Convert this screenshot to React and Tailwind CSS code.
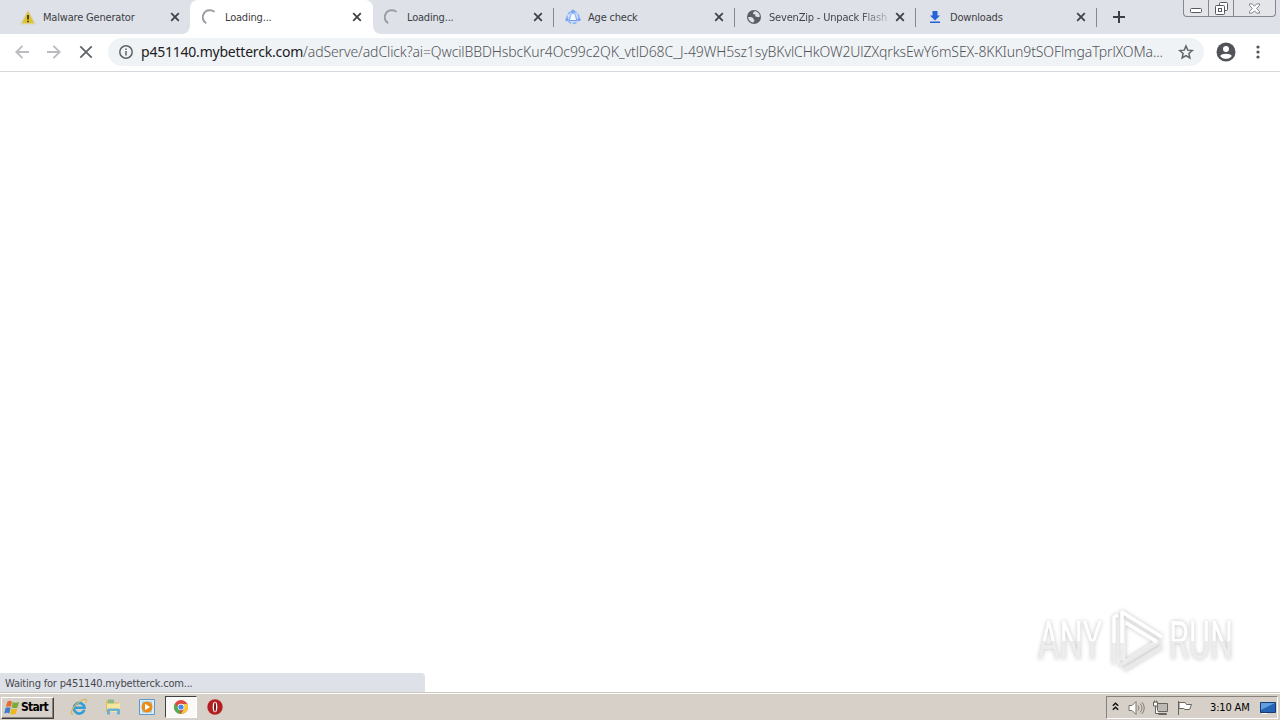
import React from 'react';

const tabs = [
    { title: 'Malware Generator', icon: 'warning', width: 'w-[190px]', pad: 'pl-5' },
    { title: 'Loading...', icon: 'spinner', active: true, width: 'w-[183px]', pad: 'pl-3' },
    { title: 'Loading...', icon: 'spinner', width: 'w-[181px]', pad: 'pl-[11px]', divider: true },
    { title: 'Age check', icon: 'puzzle', width: 'w-[181px]', pad: 'pl-[11px]', divider: true },
    { title: 'SevenZip - Unpack Flash', icon: 'globe', width: 'w-[181px]', pad: 'pl-[11px]', divider: true, fade: true },
    { title: 'Downloads', icon: 'download', width: 'w-[181px]', pad: 'pl-[11px]', divider: true },
];

// Favicons of the tabs
const TabIcon = ({ name }) => {
    if (name === 'warning') {
        return (
            <svg width="16" height="16" viewBox="0 0 16 16">
                <path d="M8 .5 16 15.500H0z" fill="#d9d4bd" />
                <path d="M8 2 14 14.200H2z" fill="#e0c22f" />
                <path d="M8 6v4.500M8 11.700v1.500" stroke="#40391c" strokeWidth="1.800" />
            </svg>
        );
    }
    if (name === 'spinner') {
        return (
            <svg width="16" height="16" viewBox="0 0 16 16" fill="none" stroke="#989ca3" strokeWidth="1.900">
                <path d="M4.200 14.200A7 7 0 0 1 8 1.200a7 7 0 0 1 4.600 1.700" />
            </svg>
        );
    }
    if (name === 'puzzle') {
        return (
            <svg width="16" height="16" viewBox="0 0 16 16" fill="none">
                <circle cx="8" cy="8.500" r="6" fill="#c9ddff" stroke="#8ab1f5" strokeWidth="1.500" strokeDasharray="4 1.500" />
                <path d="M8 4.200c2.600 0 2.600 3.800 3.800 7.300H4.200C5.400 8 5.400 4.200 8 4.200z" fill="#f5f9ff" stroke="#6f9dee" strokeLinejoin="round" />
                <g fill="#77a2ee">
                    <circle cx="8" cy="2.200" r="1.700" />
                    <circle cx="1.900" cy="10.500" r="1.600" />
                    <circle cx="14.100" cy="10.500" r="1.600" />
                </g>
            </svg>
        );
    }
    if (name === 'globe') {
        return (
            <svg width="16" height="16" viewBox="0 0 16 16">
                <circle cx="8" cy="8" r="7" fill="#5b5f65" />
                <path d="M2.200 8.200c2.300-.5 5 .1 5.200 1.600.1 1 1.300.8 1 1.900-.2.8-1 .8-1.200 2C4.700 13.200 2.300 11.300 2.200 8.200zM8.500 2.300 7 3.800l.1 1.300 2.200.3-.2 1.800 3.300 1 1.500-.6C13.700 4.600 11.500 2.300 8.500 2.300z" fill="#dee1e6" />
            </svg>
        );
    }
    return (
        <svg width="16" height="16" viewBox="0 0 16 16" fill="#2464d8">
            <path d="M5.500 2h5v4.500H13L8 11.500l-5-5h2.500zM3 12.600h10V14H3z" />
        </svg>
    );
};

const CloseIcon = () => (
    <svg width="10" height="10" viewBox="0 0 10 10" stroke="#3f4246" strokeWidth="1.800" className="shrink-0">
        <path d="m1.200 1.200 7.600 7.600M8.800 1.200 1.200 8.800" />
    </svg>
);

const Tab = ({ tab }) => (
    <div className={`relative flex h-[34px] shrink-0 items-center ${tab.width} ${tab.pad} ${tab.active ? 'rounded-t-lg bg-white' : ''}`}>
        {/* Flared feet of the selected tab */}
        {tab.active && (
            <>
                <svg width="8" height="8" viewBox="0 0 8 8" className="absolute bottom-0 -left-2"><path d="M8 0v8H0a8 8 0 0 0 8-8" fill="#fff" /></svg>
                <svg width="8" height="8" viewBox="0 0 8 8" className="absolute -right-2 bottom-0"><path d="M0 0v8h8a8 8 0 0 1-8-8" fill="#fff" /></svg>
            </>
        )}
        <TabIcon name={tab.icon} />
        <span className={`ml-[7px] flex-1 overflow-hidden pt-0.5 whitespace-nowrap text-[11px] tracking-[-0.19px] ${tab.fade ? 'bg-gradient-to-r from-[#3c4043] from-70% to-[#c0c3c8] to-96% bg-clip-text text-transparent' : 'text-[#3c4043]'}`}>
            {tab.title}
        </span>
        <div className="mr-[10px]">
            <CloseIcon />
        </div>
        {tab.divider && <div className="h-[19px] w-px bg-[#85888e]" />}
        {tab.active && <div className="w-px" />}
    </div>
);

const WindowControls = () => (
    <div className="mr-[4px] ml-auto flex h-[17px] self-start rounded-b-[4px] border border-t-0 border-[#85888e] bg-[#e3e5e9]">
        <div className="flex w-[25px] items-center justify-center border-r border-[#85888e]">
            <svg width="12" height="5" className="mt-1" fill="#fff" stroke="#55585e"><rect x=".5" y=".5" width="11" height="4" rx="1" /></svg>
        </div>
        <div className="flex w-[25px] items-center justify-center border-r border-[#85888e]">
            <svg width="13" height="13" viewBox="0 0 13 13" fill="#fff" stroke="#55585e">
                <rect x="4.500" y=".5" width="8" height="8" rx="1" />
                <rect x=".5" y="3.500" width="9" height="9" rx="1" />
                <rect x="3.500" y="6.500" width="3" height="3" />
            </svg>
        </div>
        <div className="flex w-[41px] items-center justify-center">
            <svg width="11" height="11" viewBox="0 0 12 11" fill="#fff" stroke="#6b6e74" strokeWidth=".9">
                <path d="M.5.500h3L6 3 8.500.500h3v1.500L8.300 5.500l3.200 3.200v1.800h-3L6 8l-2.500 2.500h-3V8.700l3.200-3.200L.5 2z" />
            </svg>
        </div>
    </div>
);

const Toolbar = () => (
    <div className="flex h-[38px] shrink-0 items-center border-b border-[#d5d7da] bg-white pb-[2px]">
        <div className="flex w-[108px] items-center gap-[18px] pl-[15px]">
            <svg width="14" height="14" viewBox="0 0 14 14" fill="none" stroke="#b9bbbe" strokeWidth="1.800"><path d="M14 7H1.500M7.500.800 1.300 7l6.200 6.200" /></svg>
            <svg width="14" height="14" viewBox="0 0 14 14" fill="none" stroke="#b9bbbe" strokeWidth="1.800"><path d="M0 7h12.500M6.500.800 12.700 7l-6.200 6.200" /></svg>
            <svg width="14" height="14" viewBox="0 0 14 14" fill="none" stroke="#5f6368" strokeWidth="1.800"><path d="m1.300 1.300 11.400 11.400M12.700 1.300 1.300 12.700" /></svg>
        </div>
        <div className="flex h-7 w-[1096px] items-center rounded-full bg-[#f0f3f5] pl-[11px]">
            <svg width="14" height="14" viewBox="0 0 14 14" fill="none" stroke="#5f6368" strokeWidth="1.500" className="shrink-0">
                <circle cx="7" cy="7" r="6.200" />
                <path d="M7 6v4.500M7 3.400v1.500" />
            </svg>
            <div className="ml-2 flex w-[1034px] shrink-0 whitespace-nowrap font-['Noto_Sans','DejaVu_Sans',sans-serif] text-[14px] leading-5">
                <span className="w-[162px] shrink-0 tracking-[-0.22px] text-[#202124]">p451140.mybetterck.com</span>
                <span className="font-light tracking-[-0.117px] text-[#50545a]">
                    /adServe/adClick?ai=QwcilBBDHsbcKur4Oc99c2QK_vtlD68C_J-49WH5sz1syBKvlCHkOW2UlZXqrksEwY6mSEX-8KKIun9tSOFlmgaTprlXOMa...
                </span>
            </div>
            <svg width="16" height="16" viewBox="0 0 24 24" fill="none" stroke="#5f6368" strokeWidth="2.200" className="ml-[3px] shrink-0">
                <path d="m12 3 2.600 6.200 6.800.6-5.100 4.500 1.500 6.600-5.800-3.500-5.800 3.500 1.500-6.600-5.100-4.500 6.800-.6z" />
            </svg>
        </div>
        <svg width="20" height="20" viewBox="0 0 20 20" className="ml-3">
            <circle cx="10" cy="10" r="9.500" fill="#505358" />
            <circle cx="10" cy="7" r="3" fill="#fff" />
            <path d="M4.200 14c1.300-3 10.300-3 11.600 0-2.500 3.800-9.100 3.800-11.600 0z" fill="#fff" />
        </svg>
        <svg width="4" height="14" viewBox="0 0 4 14" fill="#505358" className="ml-5">
            <circle cx="2" cy="2" r="1.600" /><circle cx="2" cy="7" r="1.600" /><circle cx="2" cy="12" r="1.600" />
        </svg>
    </div>
);

const Watermark = () => (
    <div className="absolute right-[43px] bottom-[19px] flex h-[64px] w-[198px] items-center drop-shadow-[0_0_2px_rgba(0,0,0,0.24)]">
        <span className="absolute left-[-1px] origin-left scale-x-[0.62] bg-gradient-to-b from-white from-50% to-[#ededed] to-50% bg-clip-text font-['Roboto','Liberation_Sans',sans-serif] text-[53px] leading-[53px] text-transparent">ANY</span>
        <svg width="60" height="64" viewBox="0 0 60 64" fill="none" strokeLinejoin="round" className="absolute left-[68px]">
            <path d="M17 12 50 32 17 53z" stroke="#f0f0f0" strokeWidth="3" />
            <path d="M54 32 12 57M55 38 17 61" stroke="#eaeaea" strokeWidth="3.500" />
            <path d="M7 34v21M15 34v17" stroke="#ededed" strokeWidth="3.500" />
            <path d="M11 6 7 8v26M15 34V3l40 25M19 14l31 19" stroke="#fff" strokeWidth="3.500" />
        </svg>
        <span className="absolute left-[130px] origin-left scale-x-[0.61] bg-gradient-to-b from-white from-50% to-[#ededed] to-50% bg-clip-text font-['Roboto','Liberation_Sans',sans-serif] text-[53px] leading-[53px] text-transparent">RUN</span>
    </div>
);

const WindowsFlag = () => (
    <svg width="16" height="15" viewBox="0 0 16 15">
        <path d="M3.500 1.500c2-1.200 3-.8 4.500 0L6.800 7c-1.500-.8-3-1-5 .1z" fill="#e66b30" />
        <path d="M8.800 2c2 1 3.700 1 6.200 0L13.500 7.400c-2 1.100-3.800.9-5.900.1z" fill="#7aab38" />
        <path d="M1.500 8c2-1 3.500-.8 5 0l-1.200 5.500c-1.500-.9-3-1-5 0z" fill="#3b7dcc" />
        <path d="M7.400 8.500c2 .9 3.600.9 5.800 0L12 13.700c-2 1-3.900 1-5.900 0z" fill="#edb91e" />
    </svg>
);

const Taskbar = () => (
    <div className="flex h-[28px] shrink-0 items-center border-t border-[#c8c6bf] bg-[#d6d0c9] shadow-[inset_0_1px_0_#fff]">
        <div className="mt-0.5 ml-px flex h-[22px] w-[53px] items-center gap-px border border-t-white border-r-[#404040] border-b-[#404040] border-l-white pl-[2px] shadow-[inset_-1px_-1px_0_#87827b]">
            <WindowsFlag />
            <span className="-mt-px text-[12px] leading-4 font-bold tracking-[-0.75px] text-black">Start</span>
        </div>
        <div className="ml-4 flex items-center">
            {/* Internet Explorer */}
            <svg width="18" height="18" viewBox="0 0 18 18" fill="none">
                <path d="M14.300 11.800A5.300 5.300 0 1 1 14.500 9.700H5" stroke="#329ed3" strokeWidth="2.600" />
                <path d="M3 16C-1.500 17 3 8 10 3.500s7.500-1.500 5.300 1.500" stroke="#d8b758" strokeWidth="1.300" />
            </svg>
            {/* Explorer */}
            <svg width="18" height="18" viewBox="0 0 18 18" className="ml-4">
                <path d="M2 2.500h5l1.500 2H15V14H2z" fill="#dfbd57" />
                <path d="M4 1.500h6v5H4z" fill="#8dbb87" />
                <path d="M3 5.500h13V14H3z" fill="#f5e59d" />
                <path d="M3 16.500V12q0-1.500 1.500-1.500h10Q16 10.500 16 12v4.500h-3V13H6v3.500z" fill="#69b0d4" />
            </svg>
            {/* Media Player */}
            <svg width="18" height="18" viewBox="0 0 18 18" className="ml-4">
                <path d="M1.500 1.500h15v15h-15z" fill="#d9edf8" stroke="#5a9bcc" />
                <path d="M4 3.500h10v11H4z" fill="#a3cbe5" />
                <circle cx="9" cy="9" r="5.500" fill="#ed8b18" />
                <path d="m7 5.800 5 3.200-5 3.200z" fill="#fff" />
            </svg>
        </div>
        <div className="mt-px ml-[9px] flex h-[22px] w-[32px] items-center justify-center border border-t-[#404040] border-r-white border-b-white border-l-[#404040] bg-[#faf9f8]">
            <svg width="14" height="14" viewBox="0 0 14 14">
                <circle cx="7" cy="7" r="7" fill="#dd4b3e" />
                <path d="M1 3.500 5 9 7 14A7 7 0 0 1 1 3.500z" fill="#4caf50" />
                <path d="M7 4h6.300A7 7 0 0 1 7 14l3-5z" fill="#f5cb37" />
                <circle cx="7" cy="7" r="3.300" fill="#fff" />
                <circle cx="7" cy="7" r="2.600" fill="#4687ed" />
            </svg>
        </div>
        <svg width="16" height="16" viewBox="0 0 16 16" className="ml-[10px]">
            <circle cx="8" cy="8" r="7.700" fill="#b51e20" />
            <ellipse cx="8" cy="8" rx="2.300" ry="5.300" fill="#fff" />
            <ellipse cx="8" cy="8" rx="1" ry="4.700" fill="#7c1515" />
        </svg>
        <div className="mt-0.5 mr-[2px] ml-auto flex h-[23px] w-[172px] items-center border border-t-[#87827b] border-r-white border-b-white border-l-[#87827b] pl-[5px]">
            <svg width="7" height="9" viewBox="0 0 7 9" fill="none" stroke="#111" strokeWidth="1.500" className="mb-0.5"><path d="m.8 3.700 2.700-2.500 2.700 2.500M.8 7.700l2.700-2.500 2.700 2.500" /></svg>
            <svg width="17" height="16" viewBox="0 0 17 16" className="ml-[9px]" fill="none" stroke="#77736d">
                <path d="M1 5.500h3l4-4v13l-4-4H1z" fill="#fff" />
                <path d="M10 5.500q2 2.500 0 5M12 3.500q4 4.500 0 9M14 2q4.500 6 0 12" strokeWidth=".9" />
            </svg>
            <svg width="17" height="16" viewBox="0 0 17 16" className="ml-[7px]" fill="#fff" stroke="#68645e">
                <path d="M5.500 3.500h10v8h-10z" fill="#bdbab5" />
                <path d="M1.500 2v4h4V2zM3.500 6v7.500h3M2.500.500v2M4.500.500v2M6.500 13.500h8v1h-8z" />
            </svg>
            <svg width="16" height="16" viewBox="0 0 16 16" className="ml-[8px]" fill="#fff" stroke="#68645e">
                <path d="M1.500 1v14M2 2.500h6l1.500 2h5l-2 5H8L6.500 8.500H2z" />
            </svg>
            <span className="ml-[17px] w-[42px] pt-px whitespace-nowrap text-[11px] tracking-[-0.15px] text-black">3:10 AM</span>
            <svg width="16" height="14" viewBox="0 0 16 14" className="ml-[8px]">
                <path d="M.5 1.500h15v10H.5z" fill="#2463b5" stroke="#183d75" />
                <path d="M1 2h14L1 9z" fill="#5f9edf" />
                <path d="M2 12.500h5" stroke="#fff" />
            </svg>
        </div>
    </div>
);

export default function App() {
    return (
        <div className="flex h-[720px] w-[1280px] flex-col overflow-hidden bg-white font-['DejaVu_Sans_Condensed','DejaVu_Sans',sans-serif]">
            <div className="flex h-[34px] shrink-0 items-center bg-[#dee1e8]">
                {tabs.map((tab, index) => (
                    <Tab key={`tab-${index}`} tab={tab} />
                ))}
                <svg width="12" height="12" viewBox="0 0 12 12" stroke="#3c4043" strokeWidth="2" className="ml-4"><path d="M6 0v12M0 6h12" /></svg>
                <WindowControls />
            </div>
            <Toolbar />

            {/* Page area, still empty while the site loads */}
            <main className="relative flex flex-1 flex-col justify-end">
                <Watermark />
                <div className="flex h-[19px] w-[425px] items-center rounded-tr-[4px] bg-[#dee1e8] pt-[3px] pl-[5px] text-[11px] tracking-[-0.19px] text-[#46494e]">
                    Waiting for p451140.mybetterck.com...
                </div>
            </main>

            <Taskbar />
        </div>
    );
}
